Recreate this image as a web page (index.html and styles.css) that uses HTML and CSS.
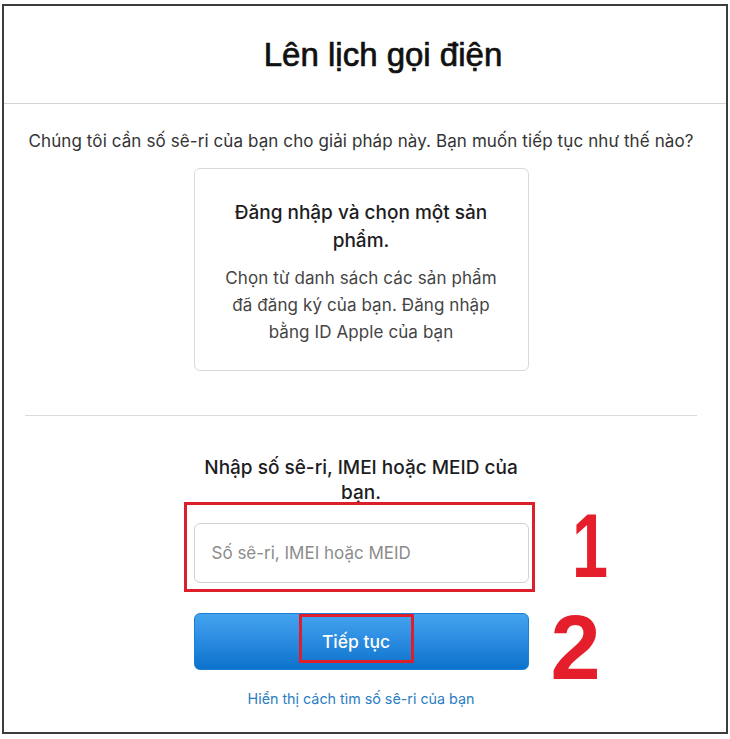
FILE: index.html
```html
<!DOCTYPE html>
<html lang="vi">
<head>
<meta charset="utf-8">
<title>Lên lịch gọi điện</title>
<link rel="stylesheet" href="styles.css">
</head>
<body>
<div class="frame">
  <header class="header">
    <h1 class="title">Lên lịch gọi điện</h1>
  </header>
  <main class="content">
    <p class="intro">Chúng tôi cần số sê-ri của bạn cho giải pháp này. Bạn muốn tiếp tục như thế nào?</p>
    <div class="card">
      <h2 class="card-title">Đăng nhập và chọn một sản phẩm.</h2>
      <p class="card-text">Chọn từ danh sách các sản phẩm đã đăng ký của bạn. Đăng nhập bằng ID Apple của bạn</p>
    </div>
    <div class="sep"></div>
    <section class="serial">
      <h2 class="serial-title">Nhập số sê-ri, IMEI hoặc MEID của bạn.</h2>
      <div class="field-wrap">
        <input class="field" type="text" placeholder="Số sê-ri, IMEI hoặc MEID">
        <span class="mark mark-field"></span>
        <span class="num num-1">1</span>
      </div>
      <div class="btn-wrap">
        <button class="btn" type="button"><span class="btn-label">Tiếp tục</span></button>
        <span class="num num-2">2</span>
      </div>
      <a class="link" href="#">Hiển thị cách tìm số sê-ri của bạn</a>
    </section>
  </main>
</div>
</body>
</html>
```

FILE: styles.css
```css
html, body {
  margin: 0;
  padding: 0;
  background: #ffffff;
}

body {
  font-family: Inter, "Noto Sans", "Liberation Sans", sans-serif;
  color: #333333;
}

.frame {
  margin: 4px 2px 0 2px;
  height: 730px;
  border: 2px solid #3c3c3c;
  box-sizing: border-box;
  display: flex;
  flex-direction: column;
}

.header {
  height: 97px;
  border-bottom: 1px solid #d4d4d4;
  display: flex;
  align-items: center;
  justify-content: center;
  padding-left: 36px;
}

.title {
  margin: 0;
  font-family: "Liberation Sans", Arial, sans-serif;
  font-weight: 400;
  font-size: 33px;
  color: #111111;
  -webkit-text-stroke: 0.7px #111111;
}

.content {
  display: flex;
  flex-direction: column;
  align-items: center;
  padding-right: 8px;
}

.intro {
  margin: 26px 0 0 0;
  font-size: 17px;
  line-height: 22px;
  letter-spacing: 0.1px;
  color: #333333;
  text-align: center;
  white-space: nowrap;
}

.card {
  margin-top: 16px;
  width: 335px;
  height: 203px;
  box-sizing: border-box;
  border: 1px solid #d9d9d9;
  border-radius: 6px;
  padding: 30px 20px 0 20px;
  text-align: center;
}

.card-title {
  margin: 0;
  font-size: 19px;
  line-height: 28px;
  font-weight: 500;
  color: #1d1d1f;
}

.card-text {
  margin: 10px 0 0 0;
  font-size: 17px;
  line-height: 27px;
  letter-spacing: 0.1px;
  color: #444444;
}

.sep {
  margin-top: 44px;
  width: 672px;
  height: 1px;
  background: #dcdcdc;
}

.serial {
  display: flex;
  flex-direction: column;
  align-items: center;
  width: 335px;
}

.serial-title {
  margin: 39px 0 0 0;
  width: 330px;
  font-size: 19px;
  line-height: 25px;
  font-weight: 500;
  color: #1d1d1f;
  text-align: center;
}

.field-wrap {
  position: relative;
  margin-top: 18px;
  width: 335px;
}

.field {
  display: block;
  width: 100%;
  height: 60px;
  box-sizing: border-box;
  border: 1px solid #d2d2d2;
  border-radius: 6px;
  padding: 0 17px;
  font-family: Inter, "Noto Sans", "Liberation Sans", sans-serif;
  font-size: 17px;
  color: #333333;
  background: #ffffff;
  outline: none;
}

.field::placeholder {
  color: #8c8c8c;
}

.mark {
  position: absolute;
  border: 3px solid #dc1f2b;
  box-sizing: border-box;
  pointer-events: none;
}

.mark-field {
  left: -10px;
  top: -21px;
  width: 351px;
  height: 90px;
}

.num {
  position: absolute;
  font-family: "Liberation Sans", Arial, sans-serif;
  font-weight: 700;
  font-size: 90px;
  line-height: 1;
  color: #e41e2b;
}

.num-1 {
  left: 378px;
  top: -22px;
  transform: scaleX(0.72);
  transform-origin: left center;
}

.num-2 {
  left: 357px;
  top: -10px;
}

.btn-wrap {
  position: relative;
  margin-top: 30px;
  width: 335px;
}

.btn {
  display: flex;
  align-items: center;
  justify-content: center;
  width: 100%;
  height: 57px;
  border: 1px solid #1c7fd6;
  border-radius: 6px;
  background: linear-gradient(to bottom, #45a4ee 0%, #2a8ae0 50%, #0b72cb 100%);
  color: #ffffff;
  font-family: Inter, "Noto Sans", "Liberation Sans", sans-serif;
  font-size: 17.5px;
  font-weight: 500;
  padding: 0;
  cursor: pointer;
}

.btn-label {
  display: flex;
  align-items: center;
  justify-content: center;
  width: 115px;
  height: 49px;
  box-sizing: border-box;
  border: 3px solid #dc1f2b;
  padding-top: 6px;
  margin-top: -7px;
  margin-left: -10px;
}

.link {
  margin-top: 18px;
  font-size: 14.3px;
  line-height: 22px;
  color: #2a7dc2;
  text-decoration: none;
}
```
